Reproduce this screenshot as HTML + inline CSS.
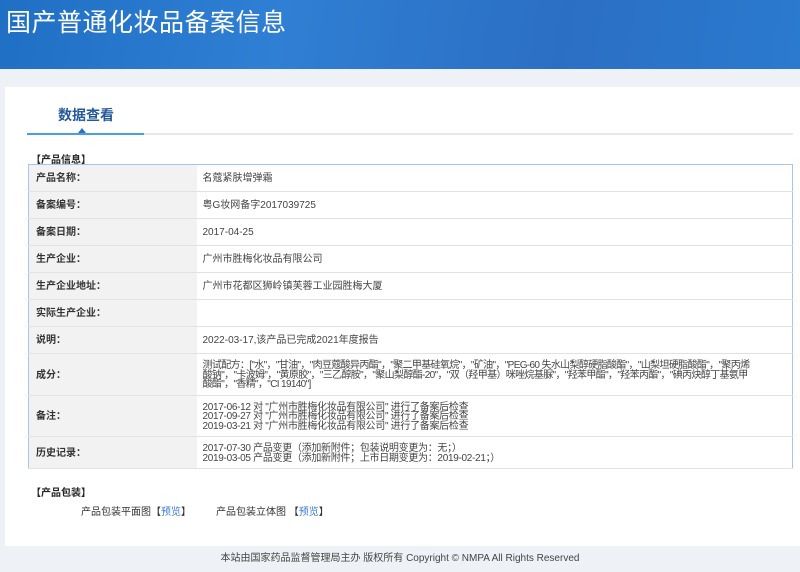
<!DOCTYPE html>
<html><head><meta charset="utf-8">
<style>
*{margin:0;padding:0;box-sizing:border-box}
body{width:800px;height:572px;overflow:hidden;background:#eef2f6;font-family:"Liberation Sans","Noto Sans CJK SC",sans-serif;color:#333;position:relative}
.hd{position:absolute;left:0;top:0;width:800px;height:69px;background:linear-gradient(100deg,#1f6fc4 0%,#2f7fd4 35%,#2b6fc4 70%,#2a7ad0 100%)}
.hd h1{position:absolute;left:6px;top:3px;font-size:25px;font-weight:normal;color:#fff;letter-spacing:0.5px}
.panel{position:absolute;left:5px;top:87px;width:795px;height:459px;background:#fff}
.tab{position:absolute;left:58px;top:105px;font-size:14px;color:#24589a;font-weight:bold}
.ul{position:absolute;left:27px;top:133px;width:766px;height:2px;background:#e8e8e8}
.ul b{position:absolute;left:0;top:0;width:117px;height:2px;background:#4a9ee2}
.tri{position:absolute;left:78px;top:128px;width:0;height:0;border-left:4px solid transparent;border-right:4px solid transparent;border-bottom:5px solid #2a72c8}
.sec{position:absolute;left:31px;font-size:10px;font-weight:bold;color:#222}
table{position:absolute;left:28px;top:164px;width:765px;border-collapse:collapse;border:1px solid #a8c6e8;font-size:10px}
td{border-bottom:1px solid #e2e2e2;vertical-align:middle;padding:2px 0 0 0;line-height:12px}
td.l{width:168px;background:#f2f2f2;padding-left:7px;font-weight:bold;color:#333}
td.v{padding-left:6px;color:#444;white-space:nowrap}
.ml{line-height:9.5px;letter-spacing:-0.3px}
.ing{letter-spacing:-0.65px}
.ft{position:absolute;top:549px;left:0;width:800px;text-align:center;font-size:10px;color:#444}
.pk{position:absolute;top:503px;font-size:10px;color:#333}
.pk a{color:#3a7bd5;text-decoration:none}
</style></head><body>
<div class="hd"><h1>国产普通化妆品备案信息</h1></div>
<div class="panel"></div>
<div class="tab">数据查看</div>
<div class="ul"><b></b></div>
<div class="tri"></div>
<div class="sec" style="top:151px">【产品信息】</div>
<table>
<tr style="height:27px"><td class="l">产品名称：</td><td class="v">名蔻紧肤增弹霜</td></tr>
<tr style="height:27px"><td class="l">备案编号：</td><td class="v">粤G妆网备字2017039725</td></tr>
<tr style="height:27px"><td class="l">备案日期：</td><td class="v">2017-04-25</td></tr>
<tr style="height:27px"><td class="l">生产企业：</td><td class="v">广州市胜梅化妆品有限公司</td></tr>
<tr style="height:27px"><td class="l">生产企业地址：</td><td class="v">广州市花都区狮岭镇芙蓉工业园胜梅大厦</td></tr>
<tr style="height:27px"><td class="l">实际生产企业：</td><td class="v"></td></tr>
<tr style="height:27px"><td class="l">说明：</td><td class="v">2022-03-17,该产品已完成2021年度报告</td></tr>
<tr style="height:42px"><td class="l">成分：</td><td class="v ml ing">测试配方：["水"，"甘油"，"肉豆蔻酸异丙酯"，"聚二甲基硅氧烷"，"矿油"，"PEG-60 失水山梨醇硬脂酸酯"，"山梨坦硬脂酸酯"，"聚丙烯<br>酸钠"，"卡波姆"，"黄原胶"，"三乙醇胺"，"聚山梨醇酯-20"，"双（羟甲基）咪唑烷基脲"，"羟苯甲酯"，"羟苯丙酯"，"碘丙炔醇丁基氨甲<br>酸酯"，"香精"，"CI 19140"]</td></tr>
<tr style="height:41px"><td class="l">备注：</td><td class="v ml">2017-06-12 对 "广州市胜梅化妆品有限公司" 进行了备案后检查<br>2017-09-27 对 "广州市胜梅化妆品有限公司" 进行了备案后检查<br>2019-03-21 对 "广州市胜梅化妆品有限公司" 进行了备案后检查</td></tr>
<tr style="height:32px"><td class="l">历史记录：</td><td class="v ml">2017-07-30 产品变更（添加新附件；包装说明变更为：无；）<br>2019-03-05 产品变更（添加新附件；上市日期变更为：2019-02-21；）</td></tr>
</table>
<div class="sec" style="top:484px">【产品包装】</div>
<div class="pk" style="left:81px">产品包装平面图【<a>预览</a>】</div>
<div class="pk" style="left:216px">产品包装立体图 【<a>预览</a>】</div>
<div class="ft">本站由国家药品监督管理局主办 版权所有 Copyright © NMPA All Rights Reserved</div>
</body></html>
